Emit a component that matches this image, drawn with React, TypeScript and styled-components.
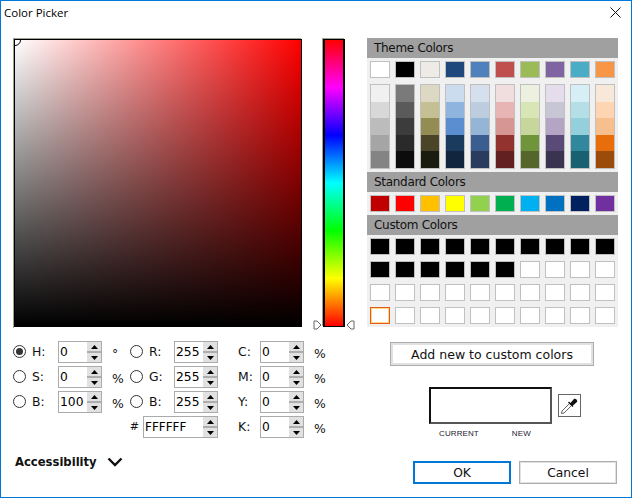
import React from "react";
import styled, { createGlobalStyle } from "styled-components";

const Global = createGlobalStyle`
  html, body { margin: 0; padding: 0; background: #fff; }
  * { box-sizing: border-box; }
`;

const Window = styled.div`
  width: 632px;
  height: 498px;
  border: 1px solid #0078d7;
  background: #fff;
  font-family: "DejaVu Sans", Verdana, sans-serif;
  color: #000;
  padding: 0 13px 0 12px;
  overflow: hidden;
`;

const TitleBar = styled.div`
  height: 37px;
  display: flex;
  justify-content: space-between;
  padding-top: 4px;
  margin-left: -9px;
`;
const Title = styled.div`
  font-family: "Open Sans", sans-serif;
  font-size: 11.5px;
  line-height: 15px;
`;
const CloseIcon = styled.svg`
  width: 11px;
  height: 11px;
  margin: 2px -3px 0 0;
`;

const Main = styled.div`
  display: grid;
  grid-template-columns: 333px 251px;
  column-gap: 21px;
`;

const Pickers = styled.div`
  display: flex;
  height: 291px;
  padding-left: 1px;
  padding-top: 1px;
`;

const SquareBox = styled.div`
  position: relative;
  overflow: hidden;
  width: 288px;
  height: 288px;
  border: 1px solid #000;
  background:
    linear-gradient(to bottom, rgba(0,0,0,0), #000),
    linear-gradient(to right, #fff, #f00);
`;
const SquareFrame = styled.div`
  box-shadow: -1px -1px 0 #a0a090;
`;
const SquareMarker = styled.div`
  position: absolute;
  left: -6px;
  top: -6px;
  width: 12px;
  height: 12px;
  border: 1px solid #000;
  border-radius: 50%;
  background: #fff;
`;
const HueWrap = styled.div`
  position: relative;
  width: 22px;
  height: 288px;
  margin-left: 21px;
`;
const HueBar = styled.div`
  height: 100%;
  border: 1px solid #000;
  border-width: 1px 2px;
  box-shadow: -1px -1px 0 #a0a090;
  background: linear-gradient(to bottom, #f00, #f0f 16.67%, #00f 33.33%, #0ff 50%, #0f0 66.67%, #ff0 83.33%, #f00);
`;
const HueArrow = styled.svg<{ $side: "left" | "right" }>`
  position: absolute;
  top: 281px;
  ${(p) => (p.$side === "left" ? "left: -10px;" : "right: -10px;")}
  width: 9px;
  height: 10px;
`;

const Values = styled.div`
  display: grid;
  grid-template-columns: 19px 26px 44px 28px 19px 25px 44px 20px 22px 44px auto;
  grid-auto-rows: 22px;
  row-gap: 3px;
  margin-top: 12px;
  font-size: 12px;
  align-items: center;
`;
const Radio = styled.span<{ $on?: boolean }>`
  display: block;
  width: 13px;
  height: 13px;
  margin-top: -2px;
  border: 1px solid #333;
  border-radius: 50%;
  background: #fff;
  position: relative;
  &::after {
    content: "";
    display: ${(p) => (p.$on ? "block" : "none")};
    position: absolute;
    left: 2px;
    top: 2px;
    width: 7px;
    height: 7px;
    border-radius: 50%;
    background: #333;
  }
`;
const Lbl = styled.span`
  font-family: "DejaVu Sans", sans-serif;
  font-size: 12.4px;
  color: #111;
  margin-top: -2px;
  white-space: nowrap;
`;
const Unit = styled(Lbl)<{ $pad?: number }>`
  padding-left: ${(p) => p.$pad ?? 10}px;
  margin-top: ${(p) => (p.$pad === 10 ? 2 : 0)}px;
`;
const Spin = styled.div`
  width: 44px;
  height: 22px;
  border: 1px solid #ababab;
  background: #fff;
  display: flex;
  align-items: center;
  justify-content: space-between;
  padding-left: 1px;
  font-size: 12.3px;
  letter-spacing: 0;
`;
const HexSpin = styled(Spin)`
  width: 75px;
  grid-column: 6 / span 2;
  justify-self: end;
  font-size: 12px;
`;
const Hash = styled(Lbl)`
  grid-column: 5;
  justify-self: end;
  margin-right: 10px;
  font-size: 11px;
`;
const SpinBtns = styled.div`
  width: 15px;
  height: 20px;
  display: flex;
  flex-direction: column;
  gap: 2px;
  background: #adadad;
  border-left: 1px solid #fff;
`;
const SpinBtn = styled.div`
  flex: 1;
  background: #e1e1e1;
  display: flex;
  align-items: center;
  justify-content: center;
  svg { width: 7px; height: 4px; display: block; }
`;

const Palette = styled.div`
  display: flex;
  flex-direction: column;
`;
const Header = styled.div`
  height: 20px;
  background: #a0a0a0;
  font-size: 12px;
  line-height: 21px;
  padding-left: 7px;
  color: #111;
  font-family: "DejaVu Sans", sans-serif;
  white-space: nowrap;
  letter-spacing: -0.3px;
`;
const Panel = styled.div<{ $h: number; $gap: number }>`
  height: ${(p) => p.$h}px;
  background: #f0f0f0;
  padding: 3px;
  display: flex;
  flex-direction: column;
  gap: ${(p) => p.$gap}px;
`;
const Row = styled.div`
  display: flex;
  gap: 5px;
`;
const Swatch = styled.div<{ $c: string; $sel?: boolean }>`
  width: 20px;
  height: 17px;
  border: 1px solid ${(p) => (p.$sel ? "#e8591a" : "#c0c0c0")};
  background: ${(p) => p.$c};
  ${(p) => (p.$sel ? "box-shadow: inset 0 0 0 1px #ffd88a;" : "")}
`;
const ShadeCol = styled.div`
  width: 20px;
  height: 85px;
  border: 1px solid #c0c0c0;
  display: flex;
  flex-direction: column;
`;
const Shade = styled.div<{ $c: string }>`
  flex: 1;
  background: ${(p) => p.$c};
`;

const Lower = styled.div`
  display: flex;
  flex-direction: column;
  align-items: flex-start;
`;
const AddBtn = styled.button`
  margin: 15px 0 0 23px;
  width: 204px;
  height: 24px;
  border: 1px solid #adadad;
  box-shadow: inset 0 0 0 2px #e1e1e1;
  background: #fff;
  font-family: "DejaVu Sans", sans-serif;
  font-size: 12.5px;
  color: #111;
  padding: 0;
`;
const PreviewRow = styled.div`
  display: flex;
  align-items: center;
  gap: 6px;
  margin: 21px 0 0 62px;
`;
const Preview = styled.div`
  width: 123px;
  height: 37px;
  border: 2px solid #111;
  border-color: #111 #555 #555 #111;
  background: #fff;
`;
const Dropper = styled.div`
  width: 23px;
  height: 23px;
  border: 1px solid #666;
  display: flex;
  align-items: center;
  justify-content: center;
`;
const Caption = styled.div`
  display: flex;
  margin: 5px 0 0 72px;
  font-family: "Liberation Sans", sans-serif;
  font-size: 8px;
  line-height: 10px;
  color: #223;
  letter-spacing: 0.1px;
`;
const CaptionNew = styled.span`
  margin-left: 33px;
`;
const BottomBar = styled.div`
  display: flex;
  gap: 8px;
  margin: 22px 0 0 46px;
`;
const Action = styled.button<{ $primary?: boolean }>`
  width: 98px;
  height: 23px;
  background: #fff;
  border: ${(p) => (p.$primary ? "2px solid #0078d7" : "1px solid #adadad")};
  ${(p) => (p.$primary ? "" : "box-shadow: inset 0 0 0 1px #e1e1e1;")}
  font-family: "DejaVu Sans", sans-serif;
  font-size: 12.3px;
  color: #111;
  padding: 0;
`;
const Access = styled.div`
  display: flex;
  align-items: center;
  gap: 10px;
  margin: 17px 0 0 2px;
  font-family: "DejaVu Sans", sans-serif;
  font-weight: 700;
  font-size: 11.6px;
  color: #111;
`;

const theme = ["#ffffff", "#000000", "#eeebe7", "#1f497d", "#4f81bd", "#c0504d", "#9bbb59", "#8064a2", "#4bacc6", "#f79646"];
const shades = [
  ["#f0f0f0", "#d8d8d8", "#bcbcbc", "#a5a5a5", "#848484"],
  ["#7a7a7a", "#5a5a5a", "#3c3c3c", "#2a2a2a", "#0c0c0c"],
  ["#ddd8c4", "#c5bf94", "#948d53", "#4a4528", "#1a1c10"],
  ["#cbdcee", "#8fb5df", "#5b8dd1", "#1a3b5e", "#12253f"],
  ["#d5dfee", "#bccde0", "#95b5d7", "#3a5e8f", "#2a3c5e"],
  ["#efdedd", "#e7b5b3", "#d69694", "#923330", "#632020"],
  ["#edf0df", "#d8e5b4", "#c7d69a", "#70943a", "#54662a"],
  ["#e5dcec", "#c6c6d4", "#b4a5c4", "#5a4a78", "#3a3450"],
  ["#d6eef6", "#b5dfe6", "#94cfdc", "#31879e", "#186170"],
  ["#f7e8d9", "#fdd5b2", "#f7bf8d", "#e86e0c", "#9c4c0a"],
];
const standard = ["#c00000", "#ff0000", "#ffc000", "#ffff00", "#92d050", "#00b050", "#00b0f0", "#0070c0", "#002060", "#7030a0"];
const ten = Array.from({ length: 10 }, (_, i) => i);

const Stepper = () => (
  <SpinBtns>
    <SpinBtn>
      <svg viewBox="0 0 7 4"><path d="M3.5 0L7 4H0z" fill="#000" /></svg>
    </SpinBtn>
    <SpinBtn>
      <svg viewBox="0 0 7 4"><path d="M0 0H7L3.5 4z" fill="#000" /></svg>
    </SpinBtn>
  </SpinBtns>
);

const Field = ({ v }: { v: string }) => (
  <Spin>
    <span>{v}</span>
    <Stepper />
  </Spin>
);

const rows = [
  { r: "H:", on: true, v: "0", u: "°", r2: "R:", v2: "255", c: "C:", v3: "0" },
  { r: "S:", v: "0", u: "%", r2: "G:", v2: "255", c: "M:", v3: "0" },
  { r: "B:", v: "100", u: "%", r2: "B:", v2: "255", c: "Y:", v3: "0" },
];

export default function App() {
  return (
    <Window>
      <Global />
      <TitleBar>
        <Title>Color Picker</Title>
        <CloseIcon viewBox="0 0 11 11">
          <path d="M0.5 0.5L10.5 10.5M10.5 0.5L0.5 10.5" stroke="#111" strokeWidth="1" fill="none" />
        </CloseIcon>
      </TitleBar>
      <Main>
        <Lower>
          <Pickers>
            <SquareFrame>
              <SquareBox>
                <SquareMarker />
              </SquareBox>
            </SquareFrame>
            <HueWrap>
              <HueBar />
              <HueArrow $side="left" viewBox="0 0 9 10">
                <path d="M1 1H4L8 5L4 9H1z" fill="#fff" stroke="#666" />
              </HueArrow>
              <HueArrow $side="right" viewBox="0 0 9 10">
                <path d="M8 1H5L1 5L5 9H8z" fill="#fff" stroke="#666" />
              </HueArrow>
            </HueWrap>
          </Pickers>
          <Values>
            {rows.map((x) => (
              <React.Fragment key={x.r + x.r2}>
                <Radio $on={x.on} />
                <Lbl>{x.r}</Lbl>
                <Field v={x.v} />
                <Unit $pad={10}>{x.u}</Unit>
                <Radio />
                <Lbl>{x.r2}</Lbl>
                <Field v={x.v2} />
                <span />
                <Lbl>{x.c}</Lbl>
                <Field v={x.v3} />
                <Unit $pad={10}>%</Unit>
              </React.Fragment>
            ))}
            <Hash>#</Hash>
            <HexSpin>
              <span>FFFFFF</span>
              <Stepper />
            </HexSpin>
            <span />
            <Lbl>K:</Lbl>
            <Field v="0" />
            <Unit $pad={10}>%</Unit>
          </Values>
          <Access>
            Accessibility
            <svg width="16" height="10" viewBox="0 0 16 10">
              <path d="M1.5 1.5L8 8L14.5 1.5" fill="none" stroke="#111" strokeWidth="2.4" />
            </svg>
          </Access>
        </Lower>
        <Lower>
          <Palette>
            <Header>Theme Colors</Header>
            <Panel $h={114} $gap={6}>
              <Row>
                {theme.map((c) => (
                  <Swatch key={c} $c={c} />
                ))}
              </Row>
              <Row>
                {shades.map((col, i) => (
                  <ShadeCol key={i}>
                    {col.map((c) => (
                      <Shade key={c} $c={c} />
                    ))}
                  </ShadeCol>
                ))}
              </Row>
            </Panel>
            <Header>Standard Colors</Header>
            <Panel $h={23} $gap={0}>
              <Row>
                {standard.map((c) => (
                  <Swatch key={c} $c={c} />
                ))}
              </Row>
            </Panel>
            <Header>Custom Colors</Header>
            <Panel $h={92} $gap={6}>
              <Row>
                {ten.map((i) => (
                  <Swatch key={i} $c="#000" />
                ))}
              </Row>
              <Row>
                {ten.map((i) => (
                  <Swatch key={i} $c={i < 6 ? "#000" : "#fff"} />
                ))}
              </Row>
              <Row>
                {ten.map((i) => (
                  <Swatch key={i} $c="#fff" />
                ))}
              </Row>
              <Row>
                {ten.map((i) => (
                  <Swatch key={i} $c="#fff" $sel={i === 0} />
                ))}
              </Row>
            </Panel>
          </Palette>
          <AddBtn>Add new to custom colors</AddBtn>
          <PreviewRow>
            <Preview />
            <Dropper>
              <svg width="19" height="19" viewBox="0 0 19 19">
                <path d="M1.5 17.5L2 15L9.5 7.5L11.5 9.5L4 17z" fill="#fff" stroke="#666" strokeWidth="1" />
                <path d="M8.5 6L13 10.5M10.5 8L14.5 3.5A1.8 1.8 0 0 1 16.5 5.5L12 9.5z" fill="#111" stroke="#111" strokeWidth="1.4" />
              </svg>
            </Dropper>
          </PreviewRow>
          <Caption>
            <span>CURRENT</span>
            <CaptionNew>NEW</CaptionNew>
          </Caption>
          <BottomBar>
            <Action $primary>OK</Action>
            <Action>Cancel</Action>
          </BottomBar>
        </Lower>
      </Main>
    </Window>
  );
}
